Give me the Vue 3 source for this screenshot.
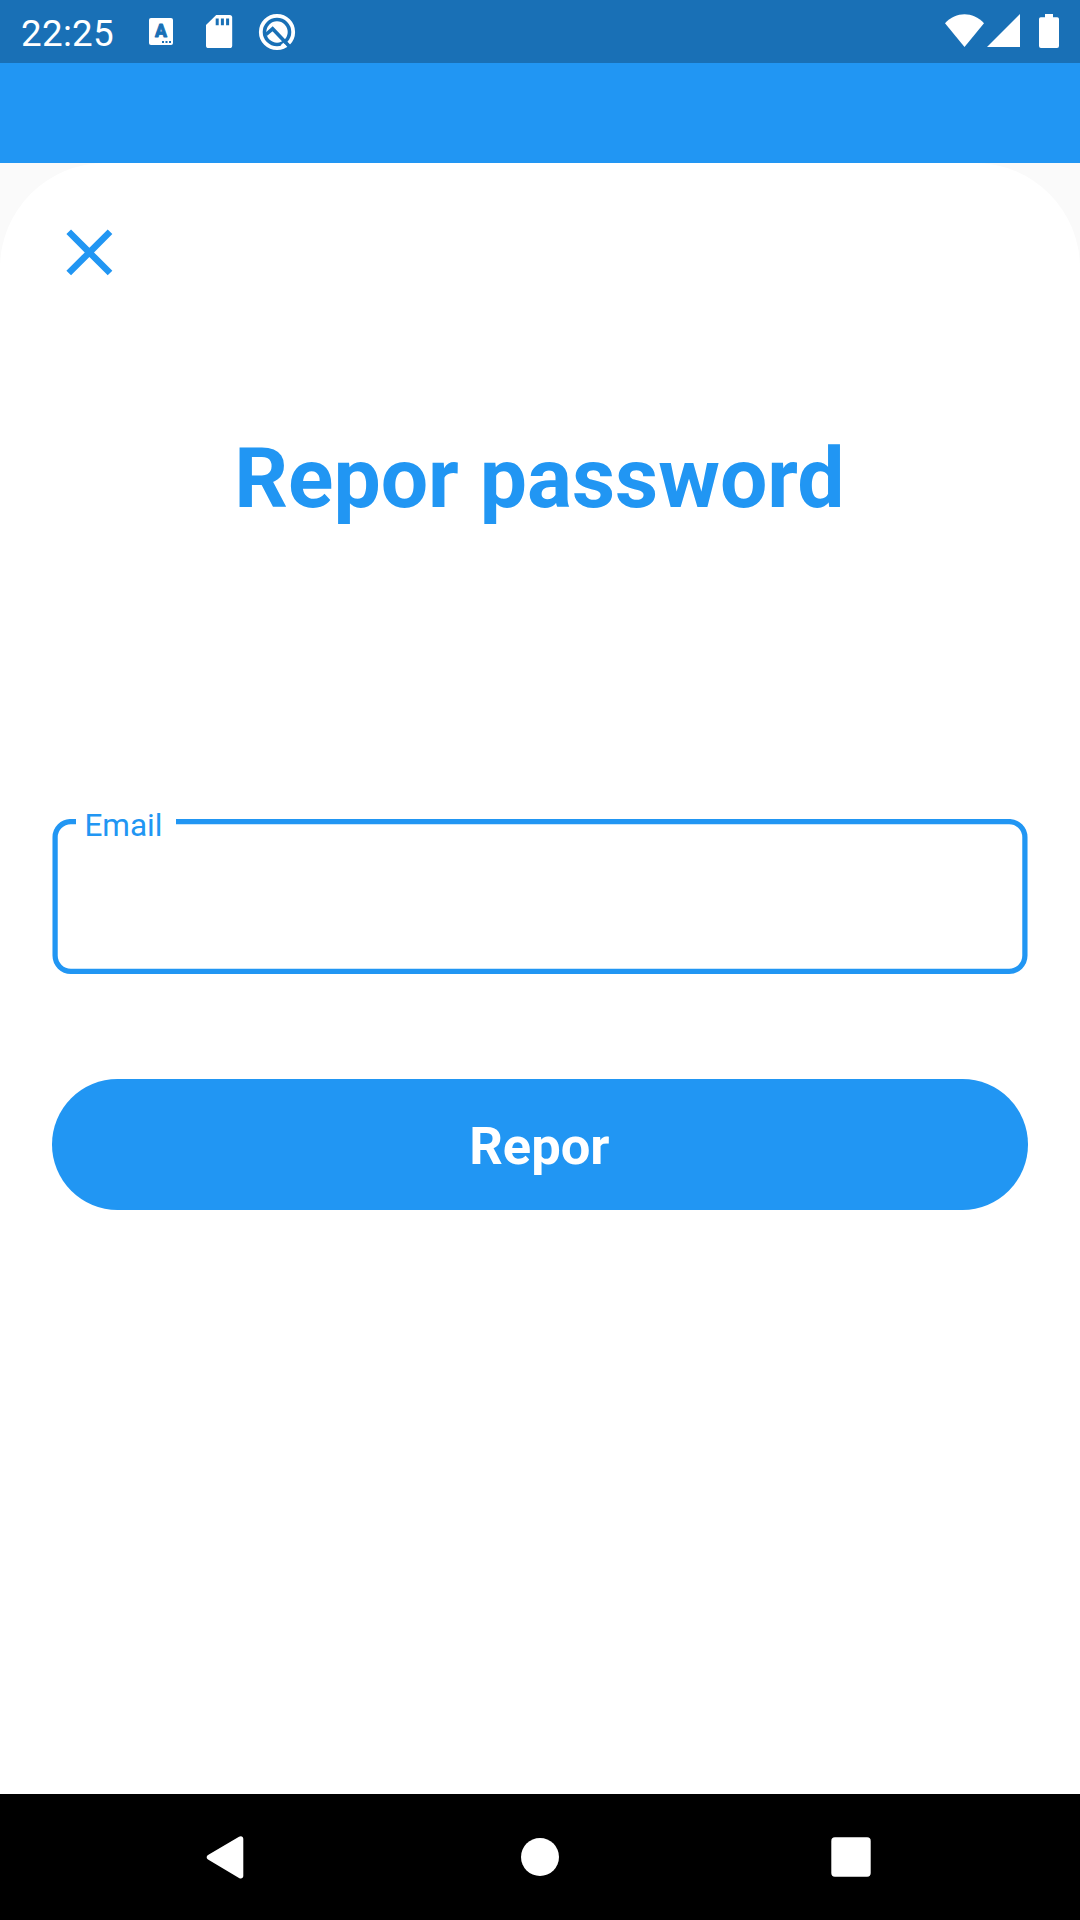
<script setup>
import { ref } from 'vue'

const time = ref('22:25')
const email = ref('')
</script>

<template>
  <div class="screen">
    <header class="status">
      <span class="time">{{ time }}</span>
      <svg class="s-letter" width="24" height="27" viewBox="0 0 24 27">
        <rect width="24" height="27" rx="2" fill="#fff" />
        <text x="12" y="19.3" class="letter" text-anchor="middle">A</text>
        <path d="M13 24h2M16.5 24h2M20 24h2" stroke="#1970b6" stroke-width="2" />
      </svg>
      <svg class="s-card" width="27" height="33" viewBox="0 0 27 33">
        <path d="M10.2 0H23.6a2.6 2.6 0 0 1 2.6 2.6V30.4A2.6 2.6 0 0 1 23.6 33H2.6A2.6 2.6 0 0 1 0 30.4V10z" fill="#fff" />
        <path d="M11.2 3.6V10.2M16.4 3.6V10.2M21.6 3.6V10.2" stroke="#1970b6" stroke-width="3" />
      </svg>
      <svg class="s-ring" width="38" height="38" viewBox="0 0 38 38">
        <circle cx="19" cy="19" r="16.2" fill="none" stroke="#fff" stroke-width="3.8" />
        <circle cx="19" cy="19" r="10.7" fill="#fff" />
        <path d="M8 21.5 14.6 15.8 31.5 33.5" fill="none" stroke="#1970b6" stroke-width="3.6" />
        <path d="M24 31 26.6 34" fill="none" stroke="#fff" stroke-width="3.6" />
      </svg>
      <svg class="s-wifi" width="40" height="34" viewBox="0 0 40 34">
        <path d="M19.5 33 0 9.2C5.6 3 12.6 .2 19.5 .2S33.4 3 39 9.2z" fill="#fff" />
      </svg>
      <svg class="s-signal" width="33" height="33" viewBox="0 0 33 33">
        <path d="M0 33 33 0V33z" fill="#fff" />
      </svg>
      <svg class="s-battery" width="20" height="34" viewBox="0 0 20 34">
        <path d="M6 0h8v3.3h4.2A1.8 1.8 0 0 1 20 5.1V32a2 2 0 0 1-2 2H2a2 2 0 0 1-2-2V5.1A1.8 1.8 0 0 1 1.8 3.3H6z" fill="#fff" />
      </svg>
    </header>
    <div class="appbar"></div>
    <main class="body">
      <section class="panel">
        <button class="close" aria-label="Close">
          <svg width="78.75" height="78.75" viewBox="0 0 24 24">
            <path d="M19 6.41 17.59 5 12 10.59 6.41 5 5 6.41 10.59 12 5 17.59 6.41 19 12 13.41 17.59 19 19 17.59 13.41 12z" fill="#2196f3" />
          </svg>
        </button>
        <h1 class="title">Repor password</h1>
        <div class="field">
          <svg class="outline" width="976" height="156" viewBox="0 0 976 156">
            <path d="M124 2.6H957A15.75 15.75 0 0 1 972.9 18.4V136.6A15.75 15.75 0 0 1 957 152.3H19A15.75 15.75 0 0 1 3.1 136.6V18.4A15.75 15.75 0 0 1 19 2.6H24" fill="none" stroke="#2196f3" stroke-width="5.25" />
          </svg>
          <label class="label" for="email">Email</label>
          <input id="email" v-model="email" class="input" type="email" />
        </div>
        <button class="submit">Repor</button>
      </section>
    </main>
    <nav class="nav">
      <svg class="n-back" width="38" height="43" viewBox="0 0 38 43">
        <path d="M33 .8C35.2-.5 37.3.6 37.3 3V39.7c0 2.4-2.1 3.5-4.3 2.2L2 23.6C.2 22.4.2 20.3 2 19.1z" fill="#fff" />
      </svg>
      <svg class="n-home" width="40" height="40" viewBox="0 0 40 40">
        <circle cx="20" cy="20" r="19" fill="#fff" />
      </svg>
      <svg class="n-recent" width="40" height="40" viewBox="0 0 40 40">
        <rect x=".3" y=".3" width="39.4" height="39.4" rx="3.6" fill="#fff" />
      </svg>
    </nav>
  </div>
</template>

<style>
body {
  margin: 0;
}
</style>

<style scoped>
.screen {
  width: 1080px;
  height: 1920px;
  display: flex;
  flex-direction: column;
  overflow: hidden;
  font-family: Roboto, sans-serif;
  background: #fafafa;
}
svg {
  display: block;
  flex: none;
}
.status {
  height: 63px;
  flex: none;
  display: flex;
  align-items: flex-start;
  background: #1970b6;
}
.time {
  width: 128px;
  padding-left: 21px;
  margin-top: 12px;
  font-size: 36.75px;
  line-height: 43px;
  letter-spacing: 0.3px;
  color: #fff;
}
.letter {
  font: 900 17.5px Roboto, sans-serif;
  fill: #1970b6;
  stroke: #1970b6;
  stroke-width: 0.8px;
  stroke-linejoin: round;
}
.s-letter {
  margin-top: 18px;
}
.s-card {
  margin: 15px 0 0 33px;
}
.s-ring {
  margin: 12.5px 0 0 25px;
}
.s-wifi {
  margin: 14px 0 0 auto;
}
.s-signal {
  margin: 14px 0 0 2px;
}
.s-battery {
  margin: 14px 21px 0 19px;
}
.appbar {
  height: 100px;
  flex: none;
  background: #2196f3;
}
.body {
  flex: 1;
  display: flex;
}
.panel {
  flex: 1;
  display: flex;
  flex-direction: column;
  box-sizing: border-box;
  padding: 50px 52.6px 0 52.4px;
  border-radius: 105px 105px 0 0;
  background: #fff;
}
button {
  border: 0;
  padding: 0;
  font-family: inherit;
}
.close {
  width: 78.75px;
  height: 78.75px;
  margin-left: -2.4px;
  background: none;
}
.title {
  margin: 138px 1px 0 0;
  font-size: 84px;
  line-height: 98px;
  font-weight: 700;
  text-align: center;
  color: #2196f3;
}
.field {
  position: relative;
  height: 155px;
  margin-top: 291.25px;
}
.outline {
  position: absolute;
  left: -0.4px;
  top: 0;
}
.label {
  position: absolute;
  left: 32px;
  top: -12px;
  font-size: 31.5px;
  line-height: 37px;
  color: #2196f3;
}
.input {
  width: 100%;
  height: 100%;
  box-sizing: border-box;
  padding: 0 31.5px;
  border: 0;
  outline: 0;
  background: none;
  font: 42px Roboto, sans-serif;
}
.submit {
  height: 131.25px;
  margin-top: 105px;
  margin-right: -0.6px;
  padding: 2px 1.6px 0 0;
  border-radius: 66px;
  background: #2196f3;
  color: #fff;
  font-size: 52.5px;
  font-weight: 700;
}
.nav {
  height: 126px;
  flex: none;
  display: flex;
  align-items: center;
  background: #000;
}
.n-back {
  margin-left: 206px;
}
.n-home {
  margin-left: 276px;
}
.n-recent {
  margin-left: 271px;
}
</style>
